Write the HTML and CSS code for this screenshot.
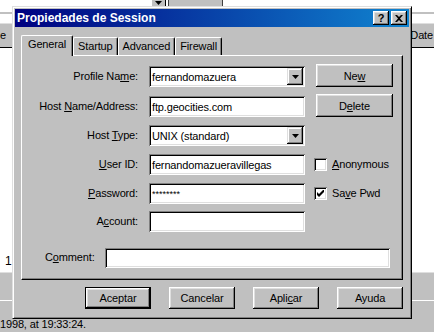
FILE: index.html
```html
<!DOCTYPE html>
<html>
<head>
<meta charset="utf-8">
<title>Propiedades de Session</title>
<link rel="stylesheet" href="styles.css">
</head>
<body>
	<div class="app">
		<div class="app-toolbar">
			<div class="app-combo">
				<span class="app-combo-btn"><svg width="7" height="4" viewBox="0 0 7 4"><path d="M0 0h7L3.5 4z"/></svg></span>
				<span class="app-combo-box"></span>
			</div>
		</div>
		<div class="app-gap"></div>
		<div class="app-head">
			<span class="app-col">e</span>
			<span class="app-col app-col-date">Date</span>
		</div>
		<div class="app-list">
			<div class="app-row">1</div>
		</div>
		<div class="app-pane"></div>
		<div class="app-status">1998, at 19:33:24.</div>
	</div>

	<div class="dialog">
		<div class="titlebar">
			<span class="title">Propiedades de Session</span>
			<span class="title-btns">
				<span class="tbtn">?</span>
				<span class="tbtn"><svg width="8" height="7" viewBox="0 0 8 7"><path d="M0 0h2l2 2 2-2h2L5 3.5 8 7H6L4 5 2 7H0l3-3.5z"/></svg></span>
			</span>
		</div>

		<div class="tabs">
			<span class="tab tab-active">General</span>
			<span class="tab">Startup</span>
			<span class="tab">Advanced</span>
			<span class="tab">Firewall</span>
		</div>

		<div class="panel">
			<div class="form">
				<label class="lbl">Profile Na<u>m</u>e:</label>
				<div class="field combo">
					<span class="val">fernandomazuera</span>
					<span class="drop"><svg width="7" height="4" viewBox="0 0 7 4"><path d="M0 0h7L3.5 4z"/></svg></span>
				</div>
				<span class="btn">Ne<u>w</u></span>

				<label class="lbl">Host <u>N</u>ame/Address:</label>
				<div class="field"><span class="val">ftp.geocities.com</span></div>
				<span class="btn">D<u>e</u>lete</span>

				<label class="lbl">Host <u>T</u>ype:</label>
				<div class="field combo">
					<span class="val">UNIX (standard)</span>
					<span class="drop"><svg width="7" height="4" viewBox="0 0 7 4"><path d="M0 0h7L3.5 4z"/></svg></span>
				</div>
				<span></span>

				<label class="lbl"><u>U</u>ser ID:</label>
				<div class="field"><span class="val">fernandomazueravillegas</span></div>
				<span class="check"><span class="box"></span><span><u>A</u>nonymous</span></span>

				<label class="lbl"><u>P</u>assword:</label>
				<div class="field"><span class="val pwd">********</span></div>
				<span class="check"><span class="box"><svg width="7" height="7" viewBox="0 0 7 7"><path d="M0 2v3l2 2 5-5V-1L2 4z"/></svg></span><span>Sa<u>v</u>e Pwd</span></span>

				<label class="lbl">A<u>c</u>count:</label>
				<div class="field"></div>
				<span></span>
			</div>

			<div class="comment">
				<label class="lbl">C<u>o</u>mment:</label>
				<div class="field"></div>
			</div>
		</div>

		<div class="actions">
			<span class="btn btn-default">Aceptar</span>
			<span class="btn">Cancelar</span>
			<span class="btn">Apli<u>c</u>ar</span>
			<span class="btn">Ayuda</span>
		</div>
	</div>
</body>
</html>
```

FILE: styles.css
```css
* {
	box-sizing: border-box;
}

body {
	margin: 0;
	width: 434px;
	height: 332px;
	overflow: hidden;
	position: relative;
	background: #c0c0c0;
	color: #000;
	font-family: "Liberation Sans", Arial, sans-serif;
	font-size: 11px;
	letter-spacing: -0.15px;
}

u {
	text-decoration: underline;
	text-underline-offset: 1px;
}

/* app behind the dialog */
.app {
	display: flex;
	flex-direction: column;
	height: 332px;
}

.app-toolbar {
	height: 14px;
	background: #fff;
	border-bottom: 2px solid #c0c0c0;
}

.app-combo {
	display: flex;
	height: 7px;
	margin-left: 152px;
}

.app-combo-btn {
	display: flex;
	align-items: flex-end;
	justify-content: center;
	width: 14px;
	padding-bottom: 1px;
	background: #c0c0c0;
	border-right: 1px solid #000;
	border-bottom: 1px solid #000;
}

.app-combo-box {
	width: 55px;
	margin-left: 2px;
	background: #c0c0c0;
	border: 1px solid #404040;
	border-top: 0;
}

.app-gap {
	height: 9px;
	background: #fff;
}

.app-head {
	display: flex;
	justify-content: space-between;
	height: 25px;
	line-height: 22px;
	background: #c0c0c0;
	border-top: 1px solid #dfdfdf;
	border-bottom: 1px solid #000;
}

.app-col-date {
	padding-right: 1px;
}

.app-list {
	flex: 1;
	display: flex;
	align-items: flex-end;
	padding: 0 0 4px 5px;
	background: #fff;
	font-size: 12px;
}

.app-pane {
	height: 29px;
	background: #c0c0c0;
	border-top: 1px solid #dfdfdf;
	border-bottom: 1px solid #fff;
}

.app-status {
	height: 31px;
	padding-top: 17px;
	line-height: 13px;
}

/* dialog */
.dialog {
	position: absolute;
	left: 12px;
	top: 6px;
	width: 400px;
	padding: 2px;
	background: #c0c0c0;
	border: 1px solid;
	border-color: #dfdfdf #000 #000 #dfdfdf;
	box-shadow: inset 1px 1px #fff, inset -1px -1px #808080;
}

.titlebar {
	display: flex;
	align-items: center;
	justify-content: space-between;
	height: 18px;
	padding: 0 2px 0 2px;
	background: linear-gradient(to right, #000080, #1084d0);
	color: #fff;
}

.title {
	font-size: 12px;
	font-weight: bold;
	letter-spacing: 0;
}

.title-btns {
	display: flex;
	gap: 2px;
}

.tbtn {
	display: flex;
	align-items: center;
	justify-content: center;
	width: 16px;
	height: 14px;
	background: #c0c0c0;
	color: #000;
	font-size: 11px;
	font-weight: bold;
	box-shadow: inset -1px -1px #000, inset 1px 1px #fff, inset -2px -2px #808080, inset 2px 2px #dfdfdf;
}

.tabs {
	position: relative;
	z-index: 1;
	display: flex;
	align-items: flex-end;
	height: 20px;
	margin: 8px 0 0 6px;
}

.tab {
	height: 18px;
	padding: 0 4px;
	line-height: 16px;
	border: 1px solid;
	border-color: #fff #000 transparent #fff;
	border-bottom: 0;
	border-radius: 2px 2px 0 0;
	box-shadow: inset -1px 0 #808080;
}

.tab-active {
	height: 21px;
	margin-bottom: -1px;
	padding: 0 6px;
	line-height: 17px;
	background: #c0c0c0;
}

.panel {
	height: 225px;
	margin: 0 6px;
	padding-top: 8px;
	border: 1px solid;
	border-color: #fff #000 #000 #fff;
	box-shadow: inset -1px -1px #808080;
}

.form {
	display: grid;
	grid-template-columns: 116px 156px 77px;
	grid-template-rows: 23px 23px 22px 22px 22px 21px;
	column-gap: 11px;
	row-gap: 7px;
	align-items: end;
}

.lbl {
	height: 21px;
	line-height: 21px;
	text-align: right;
	white-space: nowrap;
}

.field {
	display: flex;
	align-items: center;
	height: 21px;
	padding: 0 3px;
	overflow: hidden;
	background: #fff;
	box-shadow: inset 1px 1px #808080, inset -1px -1px #fff, inset 2px 2px #000, inset -2px -2px #dfdfdf;
}

.combo {
	padding-right: 2px;
}

.val {
	flex: 1;
	white-space: nowrap;
}

.pwd {
	font-size: 9px;
	letter-spacing: 0;
}

.drop {
	display: flex;
	align-items: center;
	justify-content: center;
	flex: none;
	width: 16px;
	height: 17px;
	background: #c0c0c0;
	box-shadow: inset -1px -1px #000, inset 1px 1px #dfdfdf, inset -2px -2px #808080, inset 2px 2px #fff;
}

.btn {
	display: flex;
	align-items: center;
	justify-content: center;
	height: 23px;
	background: #c0c0c0;
	box-shadow: inset -1px -1px #000, inset 1px 1px #fff, inset -2px -2px #808080, inset 2px 2px #dfdfdf;
}

.btn-default {
	box-shadow: inset 0 0 0 1px #000, inset -2px -2px #000, inset 2px 2px #fff, inset -3px -3px #808080, inset 3px 3px #dfdfdf;
}

.check {
	display: flex;
	align-items: center;
	gap: 5px;
	align-self: center;
	margin-left: -2px;
	white-space: nowrap;
}

.box {
	display: flex;
	align-items: center;
	justify-content: center;
	width: 13px;
	height: 13px;
	background: #fff;
	box-shadow: inset 1px 1px #808080, inset -1px -1px #fff, inset 2px 2px #000, inset -2px -2px #dfdfdf;
}

.comment {
	display: flex;
	align-items: center;
	margin-top: 15px;
	padding-left: 23px;
}

.comment .lbl {
	margin-right: 10px;
}

.comment .field {
	width: 285px;
	height: 20px;
}

.actions {
	display: flex;
	justify-content: flex-end;
	gap: 18px;
	padding: 7px 6px 7px 0;
}

.actions .btn {
	width: 66px;
	height: 22px;
}
```
